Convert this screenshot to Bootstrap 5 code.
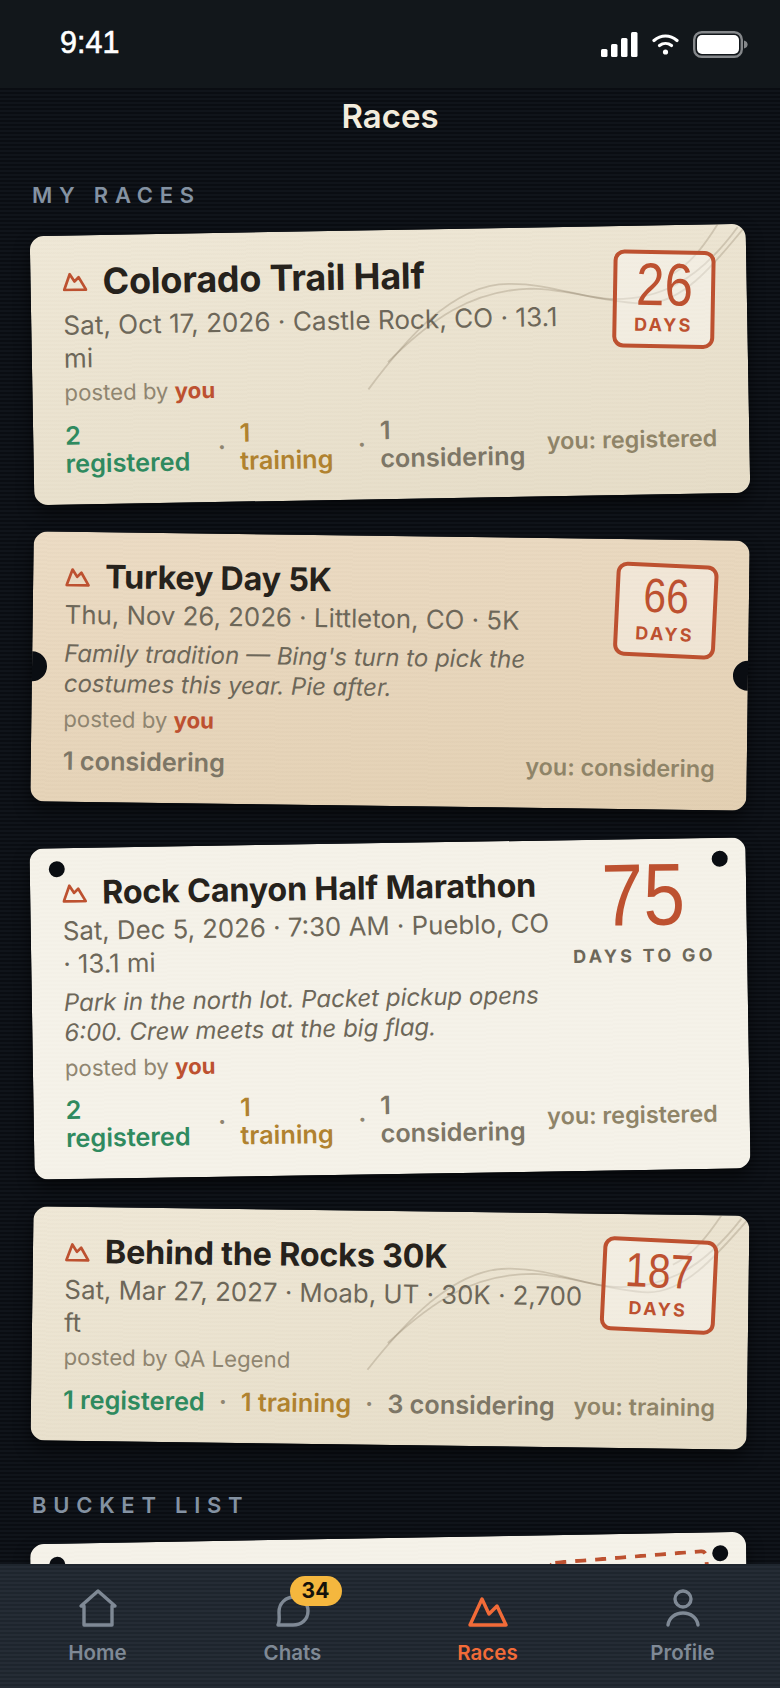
<!DOCTYPE html>
<html lang="en">
<head>
  <meta charset="UTF-8">
  <title>Races</title>
  <link href="https://cdn.jsdelivr.net/npm/bootstrap@5.3.0/dist/css/bootstrap.min.css" rel="stylesheet">
  <style>
    body { background: #0a0d12; font-family: Inter, "Liberation Sans", sans-serif; }
    .phone { width: 780px; height: 1688px; overflow: hidden; }
    .status-bar { height: 88px; flex: none; background: #12171b; color: #fff; padding: 0 32px 0 60px; }
    .status-time { font-family: "Liberation Sans", sans-serif; font-size: 30.5px; font-weight: 400; -webkit-text-stroke: .6px #fff; margin-top: -2px; }
    .status-icons { gap: 14px; }
    .race-scroll {
      flex: 1 1 0; min-height: 0; overflow: hidden; padding: 0 32px;
      background: repeating-linear-gradient(180deg, #0a0d12 0 2px, #10141a 2px 4px);
    }
    .page-title { height: 56px; line-height: 56px; margin: 0; text-align: center; color: #f3ecdd; font-size: 33px; font-weight: 600; }
    .section-label { margin: 39px 0 23px; height: 24px; line-height: 24px; color: #8492a2; font-size: 22px; font-weight: 600; letter-spacing: 6.75px; }
    .section-label.next { margin: 48px 0 21px; }
    .ticket {
      border: 0; border-radius: 14px; margin-bottom: 37px; padding: 25px 32px 27px; color: #26221c;
      box-shadow: 0 8px 16px rgba(0, 0, 0, .55);
      overflow: hidden;
    }
    .tilt-a { transform: rotate(-1deg); }
    .tilt-b { transform: rotate(.75deg); }
    .tilt-c { transform: rotate(-.9deg); }
    .paper-sand { background: repeating-linear-gradient(180deg, rgba(120, 100, 70, .02) 0 2px, transparent 2px 4px), linear-gradient(170deg, #efe8d7, #e6ddc8); }
    .paper-peach { background: repeating-linear-gradient(180deg, rgba(120, 100, 70, .025) 0 2px, transparent 2px 4px), linear-gradient(170deg, #ecdcc5, #e3d0b3); }
    .paper-white { background: repeating-linear-gradient(180deg, rgba(120, 100, 70, .012) 0 2px, transparent 2px 4px), #f5f2e9; }
    .contour { position: absolute; top: 0; left: 0; width: 716px; height: 269px; pointer-events: none; }
    .contour path { fill: none; stroke: rgba(120, 105, 80, .25); stroke-width: 1.8; }
    .ticket-main { position: relative; }
    .ticket-info { flex: 1 1 0; min-width: 0; padding-right: 18px; }
    .ticket-title { font-size: 32.3px; line-height: 40px; font-weight: 700; margin: 0; color: #26221c; letter-spacing: -.2px; }
    .ticket-title.title-big { font-size: 36px; line-height: 44px; margin-top: -1px; }
    .ticket-title svg { width: 25px; height: 19px; margin-right: 15px; flex: none; }
    .ticket-title svg path { fill: none; stroke: #bd5130; stroke-width: 2.6; stroke-linejoin: round; }
    .ticket-meta { font-size: 25.8px; line-height: 33px; color: #6d6759; margin-top: 1px; }
    .ticket-meta.meta-big { font-size: 26.15px; margin-top: 5px; padding-right: 12px; }
    .ticket-note { font-size: 24px; line-height: 30px; font-style: italic; color: #6d6759; margin-top: 8px; }
    .ticket-poster { font-size: 22.2px; line-height: 30px; color: #8f8570; margin-top: 5px; }
    .ticket-meta + .ticket-poster { margin-top: 3px; margin-bottom: 1px; }
    .ticket-poster b { color: #bd5130; font-weight: 700; }
    .stamp {
      flex: none; width: 102px; height: 94px; border: 4px solid #bd5130; border-radius: 11px; color: #bd5130;
      background: rgba(255, 255, 255, .38); transform: rotate(2deg); text-align: center; margin-top: -1px;
    }
    .stamp-wide { width: 115px; }
    .stamp-tall { height: 98px; margin-top: 0; }
    .stamp-num { display: inline-block; font-family: "Liberation Sans", sans-serif; font-size: 60px; line-height: 58px; transform: scaleX(.85); margin-top: 2px; }
    .stamp-small .stamp-num { font-size: 48px; line-height: 54px; }
    .stamp-label { font-size: 18px; line-height: 22px; font-weight: 700; letter-spacing: 2.4px; }
    .go-count { flex: none; width: 142px; text-align: center; }
    .go-num { display: block; font-family: "Liberation Sans", sans-serif; font-size: 88px; line-height: 78px; color: #bd5130; transform: scaleX(.85); margin-top: -8px; }
    .go-label { font-size: 18px; line-height: 24px; font-weight: 700; letter-spacing: 3.2px; color: #6d6759; margin-top: 10px; white-space: nowrap; }
    .counts { position: relative; font-size: 25.3px; line-height: 28px; font-weight: 600; margin-top: 13px; gap: 14px; }
    .counts .sep { color: #8f8570; flex: none; }
    .cnt-reg { color: #2f8a5f; }
    .cnt-train { color: #b0822f; }
    .cnt-cons { color: #7d7666; }
    .cnt-you { color: #8f8468; margin-left: auto; flex: none; font-size: 23.4px; }
    .hole { position: absolute; width: 16px; height: 16px; border-radius: 50%; background: #0a0d12; top: 13px; }
    .hole.l { left: 19px; }
    .hole.r { right: 18px; }
    .notch { position: absolute; width: 30px; height: 30px; border-radius: 50%; background: #0a0d12; top: calc(50% - 15px); }
    .notch.l { left: -15px; }
    .notch.r { right: -15px; }
    .ticket-bucket { height: 240px; }
    .dash-stamp { position: absolute; top: 21px; right: 35px; width: 160px; height: 110px; transform: rotate(-3.5deg); }
    .dash-stamp rect { fill: none; stroke: #bd5130; stroke-width: 4; stroke-dasharray: 11 9; }
    .tab-bar {
      height: 124px; flex: none;
      background: repeating-linear-gradient(180deg, #1e252d 0 2px, #252c35 2px 4px);
    }
    .tab-bar .nav-link { padding: 24px 0 0; color: #7f8995; font-size: 20.5px; line-height: 28px; font-weight: 600; position: relative; }
    .tab-bar .nav-link.active { color: #f26b38; }
    .tab-icon { display: block; width: 40px; height: 40px; margin: 0 auto 11px; fill: none; stroke: currentColor; stroke-width: 3.4; stroke-linejoin: round; stroke-linecap: round; }
    .tab-badge {
      position: absolute; top: 12px; left: calc(50% - 3px); width: 52px; height: 30px; border-radius: 15px;
      background: #f5b73e; color: #15120b; font-size: 21px; line-height: 30px; font-weight: 700;
    }
  </style>
</head>
<body>
  <div class="phone d-flex flex-column">
    <div class="status-bar d-flex align-items-center justify-content-between">
      <span class="status-time">9:41</span>
      <div class="status-icons d-flex align-items-center">
        <svg width="37" height="25" viewBox="0 0 37 25" fill="#fff">
          <rect x="0" y="17" width="6.5" height="8" rx="1.5"/>
          <rect x="10" y="12" width="6.5" height="13" rx="1.5"/>
          <rect x="20" y="6" width="6.5" height="19" rx="1.5"/>
          <rect x="30" y="0" width="6.5" height="25" rx="1.5"/>
        </svg>
        <svg width="27" height="21" viewBox="0 0 27 21" fill="none" stroke="#fff" stroke-width="3.2" stroke-linecap="round">
          <path d="M2 6.5C9 .5 18 .5 25 6.5"/>
          <path d="M7.5 11.5C11 8.8 16 8.8 19.5 11.5"/>
          <circle cx="13.5" cy="18" r="2.6" fill="#fff" stroke="none"/>
        </svg>
        <svg width="55" height="27" viewBox="0 0 55 27">
          <rect x="1.2" y="1.2" width="47.6" height="24.6" rx="7.5" fill="none" stroke="#85888b" stroke-width="2.4"/>
          <rect x="4" y="4" width="42" height="19" rx="5" fill="#fff"/>
          <path d="M51 9.5c2.6.7 3.6 2.2 3.6 4s-1 3.3-3.6 4z" fill="#85888b"/>
        </svg>
      </div>
    </div>

    <div class="race-scroll">
      <h1 class="page-title">Races</h1>
      <div class="section-label">MY RACES</div>

      <div class="card ticket tilt-a paper-sand">
        <svg class="contour" viewBox="0 0 716 269">
          <path d="M336 159C370 115 420 55 478 56C520 56 550 72 583 73C625 74 665 60 708 3"/>
          <path d="M356 132C400 90 440 62 500 61C540 62 575 77 615 78C650 78 680 45 716 2"/>
          <path d="M640 50C660 40 675 20 688 0"/>
        </svg>
        <div class="ticket-main d-flex">
          <div class="ticket-info">
            <h2 class="ticket-title title-big d-flex align-items-center">
              <svg viewBox="0 0 24 18"><path d="M1.5 16.5L7 1.5L11.5 8.5L15.5 4.5L22.5 16.5Z"/></svg>Colorado Trail Half
            </h2>
            <div class="ticket-meta meta-big">Sat, Oct 17, 2026 · Castle Rock, CO · 13.1 mi</div>
            <div class="ticket-poster">posted by <b>you</b></div>
          </div>
          <div class="stamp stamp-tall">
            <span class="stamp-num">26</span>
            <div class="stamp-label">DAYS</div>
          </div>
        </div>
        <div class="counts d-flex align-items-center">
          <span class="cnt-reg">2 registered</span><span class="sep">·</span>
          <span class="cnt-train">1 training</span><span class="sep">·</span>
          <span class="cnt-cons">1 considering</span>
          <span class="cnt-you">you: registered</span>
        </div>
      </div>

      <div class="card ticket tilt-b paper-peach">
        <span class="notch l"></span><span class="notch r"></span>
        <div class="ticket-main d-flex">
          <div class="ticket-info">
            <h2 class="ticket-title d-flex align-items-center">
              <svg viewBox="0 0 24 18"><path d="M1.5 16.5L7 1.5L11.5 8.5L15.5 4.5L22.5 16.5Z"/></svg>Turkey Day 5K
            </h2>
            <div class="ticket-meta">Thu, Nov 26, 2026 · Littleton, CO · 5K</div>
            <div class="ticket-note">Family tradition — Bing's turn to pick the costumes this year. Pie after.</div>
            <div class="ticket-poster">posted by <b>you</b></div>
          </div>
          <div class="stamp stamp-small">
            <span class="stamp-num">66</span>
            <div class="stamp-label">DAYS</div>
          </div>
        </div>
        <div class="counts d-flex align-items-center">
          <span class="cnt-cons">1 considering</span>
          <span class="cnt-you">you: considering</span>
        </div>
      </div>

      <div class="card ticket tilt-c paper-white">
        <span class="hole l"></span><span class="hole r"></span>
        <div class="ticket-main d-flex">
          <div class="ticket-info">
            <h2 class="ticket-title d-flex align-items-center">
              <svg viewBox="0 0 24 18"><path d="M1.5 16.5L7 1.5L11.5 8.5L15.5 4.5L22.5 16.5Z"/></svg>Rock Canyon Half Marathon
            </h2>
            <div class="ticket-meta">Sat, Dec 5, 2026 · 7:30 AM · Pueblo, CO · 13.1 mi</div>
            <div class="ticket-note">Park in the north lot. Packet pickup opens 6:00. Crew meets at the big flag.</div>
            <div class="ticket-poster">posted by <b>you</b></div>
          </div>
          <div class="go-count">
            <span class="go-num">75</span>
            <div class="go-label">DAYS TO GO</div>
          </div>
        </div>
        <div class="counts d-flex align-items-center">
          <span class="cnt-reg">2 registered</span><span class="sep">·</span>
          <span class="cnt-train">1 training</span><span class="sep">·</span>
          <span class="cnt-cons">1 considering</span>
          <span class="cnt-you">you: registered</span>
        </div>
      </div>

      <div class="card ticket tilt-b paper-sand">
        <svg class="contour" viewBox="0 0 716 269">
          <path d="M336 159C370 115 420 55 478 56C520 56 550 72 583 73C625 74 665 60 708 3"/>
          <path d="M356 132C400 90 440 62 500 61C540 62 575 77 615 78C650 78 680 45 716 2"/>
          <path d="M640 50C660 40 675 20 688 0"/>
        </svg>
        <div class="ticket-main d-flex">
          <div class="ticket-info">
            <h2 class="ticket-title d-flex align-items-center">
              <svg viewBox="0 0 24 18"><path d="M1.5 16.5L7 1.5L11.5 8.5L15.5 4.5L22.5 16.5Z"/></svg>Behind the Rocks 30K
            </h2>
            <div class="ticket-meta">Sat, Mar 27, 2027 · Moab, UT · 30K · 2,700 ft</div>
            <div class="ticket-poster">posted by QA Legend</div>
          </div>
          <div class="stamp stamp-small stamp-wide">
            <span class="stamp-num">187</span>
            <div class="stamp-label">DAYS</div>
          </div>
        </div>
        <div class="counts d-flex align-items-center">
          <span class="cnt-reg">1 registered</span><span class="sep">·</span>
          <span class="cnt-train">1 training</span><span class="sep">·</span>
          <span class="cnt-cons">3 considering</span>
          <span class="cnt-you">you: training</span>
        </div>
      </div>

      <div class="section-label next">BUCKET LIST</div>
      <div class="card ticket tilt-a paper-white ticket-bucket">
        <span class="hole l"></span><span class="hole r"></span>
        <svg class="dash-stamp" viewBox="0 0 160 110"><rect x="2" y="2" width="156" height="106" rx="5"/></svg>
      </div>
    </div>

    <nav class="nav nav-justified tab-bar">
      <a class="nav-link text-center" href="#">
        <svg class="tab-icon" viewBox="0 0 40 40"><path d="M20 3L3 18H6V37H34V18H37Z"/></svg>Home
      </a>
      <a class="nav-link text-center" href="#">
        <svg class="tab-icon" viewBox="0 0 40 40"><path d="M5 37C7 33 6 29 6 24C6 15 13 9 21 9C29 9 35 15 35 23C35 32 28 37 20 37Z"/></svg>Chats
        <span class="tab-badge">34</span>
      </a>
      <a class="nav-link active text-center" href="#">
        <svg class="tab-icon" viewBox="0 0 40 40"><path d="M2 37L14 11L21 26L29 18L38 37Z"/></svg>Races
      </a>
      <a class="nav-link text-center" href="#">
        <svg class="tab-icon" viewBox="0 0 40 40"><circle cx="20" cy="11" r="8"/><path d="M5 37C6 30 12 25 20 25C28 25 34 30 35 37"/></svg>Profile
      </a>
    </nav>
  </div>
</body>
</html>
